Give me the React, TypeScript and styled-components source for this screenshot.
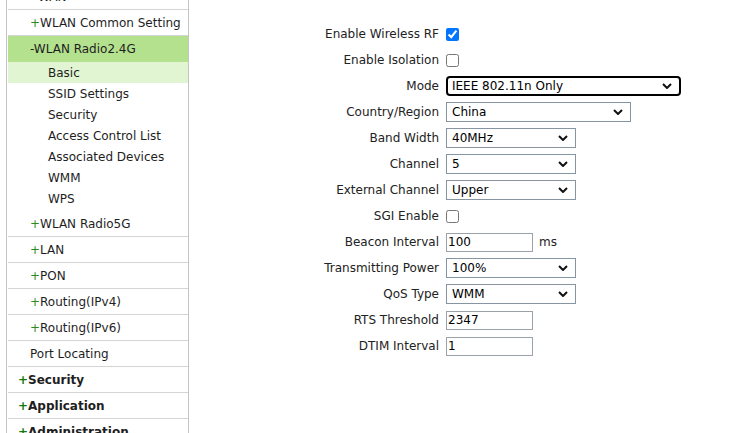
import styled, { createGlobalStyle } from 'styled-components'
import { Fragment } from 'react'

const GlobalStyle = createGlobalStyle`
  html, body {
    margin: 0;
    padding: 0;
    background: #fff;
    overflow: hidden;
  }
  body {
    font-family: "DejaVu Sans", Verdana, sans-serif;
    font-size: 12px;
    color: #222;
  }
`

const Page = styled.div`
  display: flex;
  align-items: stretch;
  margin-top: -16px;
  height: 460px;
`

const Sidebar = styled.div`
  margin-left: 6px;
  width: 180px;
  padding-left: 1px;
  border-left: 1px solid #c4c4c4;
  border-right: 1px solid #c4c4c4;
`

const MenuRow = styled.div<{ $indent: number; $bold?: boolean }>`
  display: flex;
  align-items: center;
  height: 25px;
  padding-left: ${(p) => p.$indent}px;
  border-bottom: 1px solid #d4d4d4;
  font-weight: ${(p) => (p.$bold ? 'bold' : 'normal')};
  color: #1e1e1e;
  white-space: nowrap;
`

const GroupHead = styled.div`
  display: flex;
  align-items: center;
  height: 26px;
  padding-left: 22px;
  background: #b4e18e;
  color: #1e1e1e;
`

const SubList = styled.div`
  padding-bottom: 2px;
`

const SubItem = styled.div<{ $active?: boolean }>`
  display: flex;
  align-items: center;
  height: 21px;
  padding-left: 40px;
  background: ${(p) => (p.$active ? '#e2f5d3' : 'transparent')};
  color: #1e1e1e;
`

const Plus = styled.span<{ $bold?: boolean }>`
  color: ${(p) => (p.$bold ? '#14780f' : '#2f8a1e')};
`

const Form = styled.div`
  flex: 1;
  padding-top: 37px;
  display: grid;
  grid-template-columns: 250px 1fr;
  grid-auto-rows: 26px;
  column-gap: 7px;
  align-content: start;
  align-items: center;
`

const Label = styled.div`
  text-align: right;
  color: #222;
  white-space: nowrap;
`

const Field = styled.div`
  display: flex;
  align-items: center;
  gap: 6px;
`

const Check = styled.input`
  width: 13px;
  height: 13px;
  margin: 0;
`

const SelectBox = styled.div<{ $width: number; $focused?: boolean }>`
  position: relative;
  width: ${(p) => p.$width}px;
  height: 20px;
  box-sizing: border-box;
  display: flex;
  align-items: center;
  padding-left: ${(p) => (p.$focused ? 4 : 5)}px;
  border: ${(p) => (p.$focused ? '2px solid #000' : '1px solid #8795a3')};
  border-radius: ${(p) => (p.$focused ? 4 : 0)}px;
  color: #000;
  background: #fff;
`

const Chevron = styled.svg`
  position: absolute;
  right: 7px;
  top: 50%;
  margin-top: -3px;
`

const TextBox = styled.div`
  width: 87px;
  height: 19px;
  box-sizing: border-box;
  display: flex;
  align-items: center;
  padding-left: 1px;
  border: 1px solid #9aa3ab;
  color: #000;
`

const Unit = styled.span`
  color: #222;
`

type Row =
  | { label: string; kind: 'check'; checked: boolean }
  | { label: string; kind: 'select'; value: string; width: number; focused?: boolean }
  | { label: string; kind: 'text'; value: string; unit?: string }

const rows: Row[] = [
  { label: 'Enable Wireless RF', kind: 'check', checked: true },
  { label: 'Enable Isolation', kind: 'check', checked: false },
  { label: 'Mode', kind: 'select', value: 'IEEE 802.11n Only', width: 235, focused: true },
  { label: 'Country/Region', kind: 'select', value: 'China', width: 185 },
  { label: 'Band Width', kind: 'select', value: '40MHz', width: 130 },
  { label: 'Channel', kind: 'select', value: '5', width: 130 },
  { label: 'External Channel', kind: 'select', value: 'Upper', width: 130 },
  { label: 'SGI Enable', kind: 'check', checked: false },
  { label: 'Beacon Interval', kind: 'text', value: '100', unit: 'ms' },
  { label: 'Transmitting Power', kind: 'select', value: '100%', width: 130 },
  { label: 'QoS Type', kind: 'select', value: 'WMM', width: 130 },
  { label: 'RTS Threshold', kind: 'text', value: '2347' },
  { label: 'DTIM Interval', kind: 'text', value: '1' },
]

const subItems = ['Basic', 'SSID Settings', 'Security', 'Access Control List', 'Associated Devices', 'WMM', 'WPS']

const renderField = (row: Row) => {
  if (row.kind === 'check') {
    return <Check type="checkbox" defaultChecked={row.checked} />
  }
  if (row.kind === 'select') {
    return (
      <SelectBox $width={row.width} $focused={row.focused}>
        {row.value}
        <Chevron width="10" height="6" viewBox="0 0 10 6">
          <path d="M1 1 L5 5 L9 1" fill="none" stroke="#111" strokeWidth="2" />
        </Chevron>
      </SelectBox>
    )
  }
  return (
    <>
      <TextBox>{row.value}</TextBox>
      {row.unit && <Unit>{row.unit}</Unit>}
    </>
  )
}

const App: React.FC = () => {
  return (
    <>
      <GlobalStyle />
      <Page>
        <Sidebar>
          <MenuRow $indent={30}>WAN</MenuRow>
          <MenuRow $indent={22}>
            <Plus>+</Plus>WLAN Common Setting
          </MenuRow>
          <GroupHead>-WLAN Radio2.4G</GroupHead>
          <SubList>
            {subItems.map((item, i) => (
              <SubItem key={item} $active={i === 0}>
                {item}
              </SubItem>
            ))}
          </SubList>
          {['WLAN Radio5G', 'LAN', 'PON', 'Routing(IPv4)', 'Routing(IPv6)'].map((item) => (
            <MenuRow key={item} $indent={22}>
              <Plus>+</Plus>
              {item}
            </MenuRow>
          ))}
          <MenuRow $indent={22}>Port Locating</MenuRow>
          {['Security', 'Application', 'Administration'].map((item) => (
            <MenuRow key={item} $indent={10} $bold>
              <Plus $bold>+</Plus>
              {item}
            </MenuRow>
          ))}
        </Sidebar>

        <Form>
          {rows.map((row) => (
            <Fragment key={row.label}>
              <Label>{row.label}</Label>
              <Field>{renderField(row)}</Field>
            </Fragment>
          ))}
        </Form>
      </Page>
    </>
  )
}

export default App
